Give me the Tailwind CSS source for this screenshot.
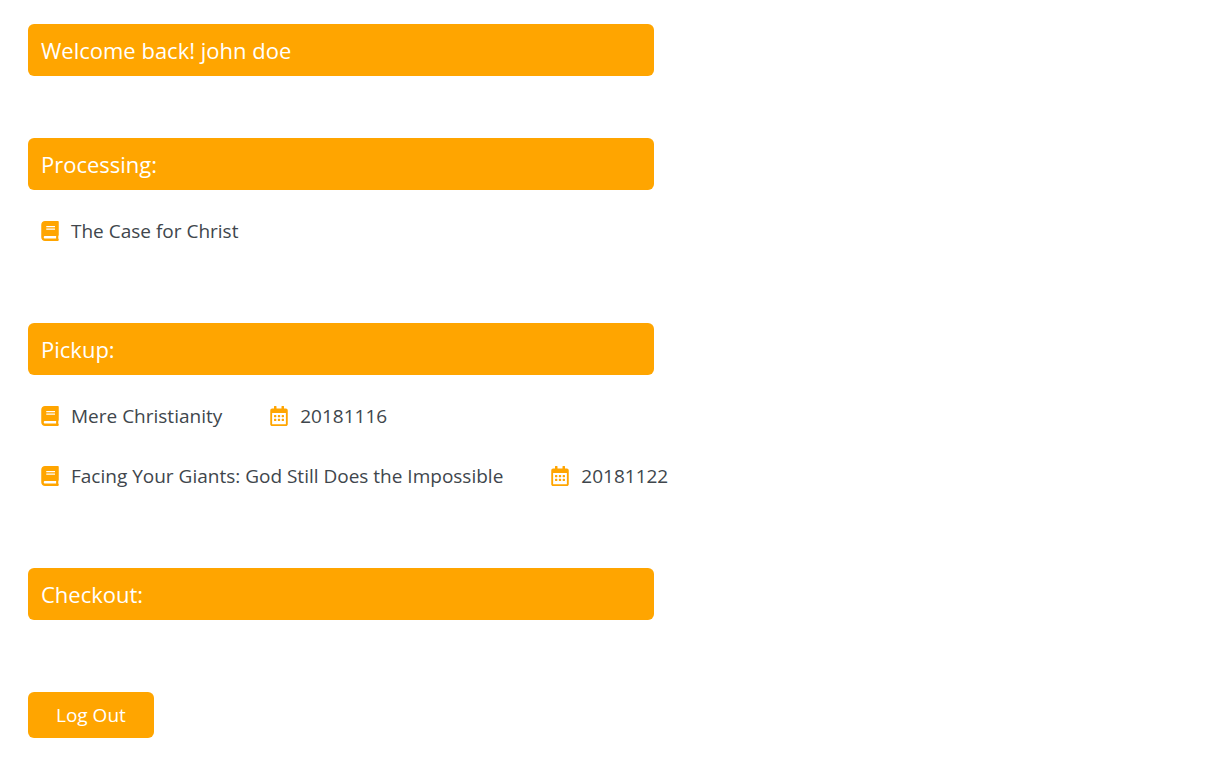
<!DOCTYPE html>
<html lang="en">
<head>
<meta charset="utf-8">
<meta name="viewport" content="width=device-width, initial-scale=1">
<title>Account</title>
<script src="https://cdn.jsdelivr.net/npm/@tailwindcss/browser@4"></script>
</head>
<body class="bg-white text-[#40464c] font-['Open_Sans',sans-serif]">
<svg class="hidden" aria-hidden="true">
  <symbol id="book" viewBox="0 0 448 512"><path fill="currentColor" d="M448 360V24c0-13.300-10.700-24-24-24H96C43 0 0 43 0 96v320c0 53 43 96 96 96h328c13.300 0 24-10.700 24-24v-16c0-7.500-3.500-14.300-8.900-18.700-4.200-15.400-4.200-59.300 0-74.700 5.400-4.300 8.900-11.100 8.900-18.600zM128 134c0-3.300 2.700-6 6-6h212c3.300 0 6 2.700 6 6v20c0 3.300-2.700 6-6 6H134c-3.300 0-6-2.700-6-6v-20zm0 64c0-3.300 2.700-6 6-6h212c3.300 0 6 2.700 6 6v20c0 3.300-2.700 6-6 6H134c-3.300 0-6-2.700-6-6v-20zm253.400 250H96c-17.700 0-32-14.300-32-32 0-17.600 14.400-32 32-32h285.400c-1.900 17.100-1.900 46.900 0 64z"/></symbol>
  <symbol id="calendar" viewBox="0 0 448 512"><path fill="currentColor" fill-rule="evenodd" d="M400 64h-48V12c0-6.600-5.400-12-12-12h-40c-6.600 0-12 5.400-12 12v52H160V12c0-6.600-5.400-12-12-12h-40c-6.600 0-12 5.400-12 12v52H48C21.500 64 0 85.500 0 112v352c0 26.500 21.500 48 48 48h352c26.500 0 48-21.500 48-48V112c0-26.500-21.500-48-48-48zM48 176h352v282c0 3.300-2.700 6-6 6H54c-3.300 0-6-2.700-6-6zM108 228h36q12 0 12 12v36q0 12-12 12h-36q-12 0-12-12v-36q0-12 12-12zM206 228h36q12 0 12 12v36q0 12-12 12h-36q-12 0-12-12v-36q0-12 12-12zM304 228h36q12 0 12 12v36q0 12-12 12h-36q-12 0-12-12v-36q0-12 12-12zM108 324h36q12 0 12 12v36q0 12-12 12h-36q-12 0-12-12v-36q0-12 12-12zM206 324h36q12 0 12 12v36q0 12-12 12h-36q-12 0-12-12v-36q0-12 12-12zM304 324h36q12 0 12 12v36q0 12-12 12h-36q-12 0-12-12v-36q0-12 12-12z"/></symbol>
</svg>
<main class="px-7 pt-6 pb-5">
  <h1 class="flex h-[52px] max-w-[626px] items-center rounded-md bg-[#ffa500] px-[13px] text-[22px] text-white">Welcome back! john doe</h1>
  <section class="mt-[62px]">
    <h2 class="flex h-[52px] max-w-[626px] items-center rounded-md bg-[#ffa500] px-[13px] text-[22px] text-white">Processing:</h2>
    <ul class="mt-[26px] flex flex-col gap-[30px] px-[13px] text-[19px] leading-[30px]">
      <li class="flex items-center gap-12"><span class="flex items-center gap-3"><svg class="h-5 w-[18px] text-[#ffa500]" aria-hidden="true"><use href="#book"/></svg>The Case for Christ</span></li>
    </ul>
  </section>
  <section class="mt-[77px]">
    <h2 class="flex h-[52px] max-w-[626px] items-center rounded-md bg-[#ffa500] px-[13px] text-[22px] text-white">Pickup:</h2>
    <ul class="mt-[26px] flex flex-col gap-[30px] px-[13px] text-[19px] leading-[30px]">
      <li class="flex items-center gap-12"><span class="flex items-center gap-3"><svg class="h-5 w-[18px] text-[#ffa500]" aria-hidden="true"><use href="#book"/></svg>Mere Christianity</span><span class="flex items-center gap-3"><svg class="h-5 w-[18px] text-[#ffa500]" aria-hidden="true"><use href="#calendar"/></svg>20181116</span></li>
      <li class="flex items-center gap-12"><span class="flex items-center gap-3"><svg class="h-5 w-[18px] text-[#ffa500]" aria-hidden="true"><use href="#book"/></svg>Facing Your Giants: God Still Does the Impossible</span><span class="flex items-center gap-3"><svg class="h-5 w-[18px] text-[#ffa500]" aria-hidden="true"><use href="#calendar"/></svg>20181122</span></li>
    </ul>
  </section>
  <section class="mt-[77px]">
    <h2 class="flex h-[52px] max-w-[626px] items-center rounded-md bg-[#ffa500] px-[13px] text-[22px] text-white">Checkout:</h2>
  </section>
  <button type="button" class="mt-[72px] block rounded-md bg-[#ffa500] px-7 py-2 text-[19px] leading-[30px] text-white">Log Out</button>
</main>
</body>
</html>
